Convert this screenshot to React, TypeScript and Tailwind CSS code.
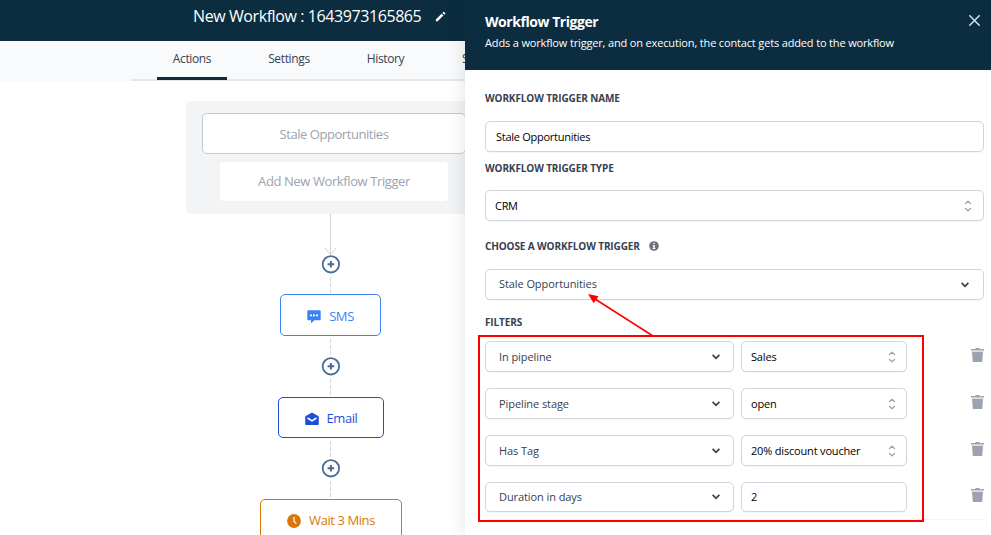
import type { ReactNode } from 'react';

interface FilterRow {
  field: string;
  value: string;
  select: boolean;
  height: string;
}

const FILTERS: FilterRow[] = [
  { field: 'In pipeline', value: 'Sales', select: true, height: 'h-[31px]' },
  { field: 'Pipeline stage', value: 'open', select: true, height: 'h-[31px]' },
  { field: 'Has Tag', value: '20% discount voucher', select: true, height: 'h-[31px]' },
  { field: 'Duration in days', value: '2', select: false, height: 'h-[30px]' },
];

function IconPencil() {
  return (
    <svg width="11" height="11" viewBox="0 0 11 11" fill="#fff" className="mt-px" aria-hidden="true">
      <path d="M.8 10.300v-1.900L6.600 2.700l1.800 1.800-5.700 5.800zM7.400 1.900l.9-.9a.6.6 0 0 1 .8 0l1.100 1.100a.6.6 0 0 1 0 .8l-.9.9z" />
    </svg>
  );
}

function IconClose() {
  return (
    <svg width="11" height="11" viewBox="0 0 11 11" stroke="#d3dcfb" strokeWidth="1.500" aria-hidden="true">
      <path d="M.3.300l10.400 10.400M10.700.300L.3 10.700" />
    </svg>
  );
}

function IconChevron() {
  return (
    <svg width="8" height="6" viewBox="0 0 8 6" fill="none" stroke="#374151" strokeWidth="1.800" aria-hidden="true">
      <path d="M.6.900L4 4.300 7.400.900" />
    </svg>
  );
}

function IconSelector() {
  return (
    <svg width="8" height="12" viewBox="0 0 8 12" fill="none" stroke="#9ca3af" strokeWidth="1.300" strokeLinecap="round" strokeLinejoin="round" aria-hidden="true">
      <path d="M1.500 3.500L4 1.200l2.500 2.300M1.500 8.500L4 10.800l2.500-2.300" />
    </svg>
  );
}

function IconTrash() {
  return (
    <svg width="13" height="15" viewBox="0 0 13 15" fill="#9ca3af" aria-hidden="true">
      <path d="M4.500 0h4v1H13v1.500H0V1h4.500z" />
      <path d="M1 3.700h11l-.8 10.400H1.800z" />
      <path d="M.5 2.500h12v1.200H.5z" fill="#d1d5db" />
    </svg>
  );
}

function IconInfo() {
  return (
    <svg width="10" height="10" viewBox="0 0 10 10" aria-hidden="true">
      <circle cx="5" cy="5" r="4.800" fill="#6b7280" />
      <path d="M4.400 1.800h1.400v1.300H4.400zM3.800 4h2v2.900h.6v1H3.600v-1h.7V5h-.5z" fill="#fff" />
    </svg>
  );
}

function IconSms() {
  return (
    <svg width="14" height="14" viewBox="0 0 14 14" aria-hidden="true">
      <path d="M1.300.300h11.400a1 1 0 0 1 1 1v8a1 1 0 0 1-1 1H7.500L4 13.200v-2.900H1.300a1 1 0 0 1-1-1v-8a1 1 0 0 1 1-1z" fill="#3b82f6" />
      <path d="M3 4.500h2v1.800H3zM6 4.500h2v1.800H6zM9 4.500h2v1.800H9z" fill="#fff" />
    </svg>
  );
}

function IconEmail() {
  return (
    <svg width="14" height="14" viewBox="0 0 14 14" aria-hidden="true">
      <path d="M7 .500l6.200 3.600c.4.200.6.500.6.900v7c0 .6-.5 1-1 1H1.200c-.6 0-1-.4-1-1V5c0-.4.200-.7.600-.9z" fill="#1d4ed8" />
      <path d="M2.600 6L7 8.900 11.400 6" fill="none" stroke="#fff" strokeWidth="1.500" />
    </svg>
  );
}

function IconClock() {
  return (
    <svg width="14" height="14" viewBox="0 0 14 14" aria-hidden="true">
      <circle cx="7" cy="7" r="6.900" fill="#d97706" />
      <path d="M7 3v4.200l2.300 2.500" fill="none" stroke="#fff" strokeWidth="1.200" />
    </svg>
  );
}

function AddStep() {
  return (
    <svg width="19" height="19" viewBox="0 0 19 19" fill="none" stroke="#4a6b93" className="shrink-0" aria-hidden="true">
      <circle cx="9.900" cy="9.300" r="8.200" strokeWidth="1.800" />
      <path d="M9.900 6v6.600M6.600 9.300h6.600" strokeWidth="2" />
    </svg>
  );
}

function Dashes({ height }: { height: number }) {
  return (
    <svg width="1" height={height} className="shrink-0" aria-hidden="true">
      <path d={`M.5 3V${height}`} stroke="#d1d5db" strokeDasharray="4 2" />
    </svg>
  );
}

function Label({ children }: { children: ReactNode }) {
  return <div className="flex h-4 items-center text-[10px] font-bold tracking-[-0.120px] text-[#374151]">{children}</div>;
}

function Field({ className, children }: { className: string; children: ReactNode }) {
  return (
    <div className={`flex items-center justify-between rounded-[5px] border border-[#d1d5db] bg-white shadow-[0_1px_1px_rgba(0,0,0,0.04)] ${className}`}>
      {children}
    </div>
  );
}

function WorkflowCanvas() {
  return (
    <main className="flex flex-1 flex-col overflow-hidden bg-white pt-5">
      <div className="ml-[186px] flex h-[113px] w-[296px] shrink-0 flex-col items-center rounded-[5px] bg-[#f3f4f6] pt-3 text-[13px] text-[#9ca3af]">
        <div className="flex h-[41px] w-[264px] items-center justify-center rounded-[5px] border border-[#c3cad0] bg-white pt-0.5 tracking-[-0.450px]">
          Stale Opportunities
        </div>
        <div className="mt-[7px] flex h-[41px] w-[230px] items-center justify-center rounded-[5px] border border-dotted border-[#e5e7eb] bg-white tracking-[-0.400px]">
          Add New Workflow Trigger
        </div>
      </div>
      <div className="flex w-[661px] shrink-0 flex-col items-center text-[13px]">
        <svg width="13" height="41" viewBox="0 0 13 41" fill="none" stroke="#d1d5db" className="shrink-0" aria-hidden="true">
          <path d="M6.500 0v41M1 34l5.500 6.500L12 34" />
        </svg>
        <AddStep />
        <Dashes height={20} />
        <div className="flex h-[42px] w-[101px] shrink-0 items-center justify-center gap-2 rounded-[5px] border border-[#3b82f6] pt-[3px] text-[#3b82f6]">
          <IconSms />
          <span className="tracking-[-0.400px]">SMS</span>
        </div>
        <Dashes height={21} />
        <AddStep />
        <Dashes height={21} />
        <div className="flex h-[41px] w-[106px] shrink-0 items-center justify-center gap-2 rounded-[5px] border border-[#1d4ed8] pt-0.5 pl-px text-[#1d4ed8]">
          <IconEmail />
          <span className="tracking-[-0.450px]">Email</span>
        </div>
        <Dashes height={21} />
        <AddStep />
        <Dashes height={21} />
        <div className="flex h-[42px] w-[142px] shrink-0 items-center justify-center gap-2 rounded-[5px] border border-[#d97706] pt-0.5 pl-px text-[#d97706]">
          <IconClock />
          <span className="tracking-[-0.420px]">Wait 3 Mins</span>
        </div>
      </div>
    </main>
  );
}

function TriggerPanel() {
  return (
    <aside className="relative z-10 flex h-full w-[526px] shrink-0 flex-col bg-white shadow-[0_0_18px_rgba(0,0,0,0.12)]">
      <header className="flex h-[70px] shrink-0 justify-between bg-[#0c2d40] pr-[11px] pl-5 text-white">
        <div>
          <h2 className="mt-3 h-5 text-[14px] leading-5 font-bold tracking-[-0.450px]">Workflow Trigger</h2>
          <p className="mt-[3px] text-[11px] leading-4 tracking-[-0.155px]">
            Adds a workflow trigger, and on execution, the contact gets added to the workflow
          </p>
        </div>
        <button type="button" aria-label="Close" className="mt-[15px] h-[11px]">
          <IconClose />
        </button>
      </header>

      <div className="flex flex-col pt-5 pl-5 text-[11px] text-[#374151]">
        <Label>WORKFLOW TRIGGER NAME</Label>
        <Field className="mt-[15px] h-[31px] w-[499px] pr-[9px] pl-2.5 text-black">
          <span className="pt-px tracking-[-0.270px]">Stale Opportunities</span>
        </Field>
        <div className="mt-2">
          <Label>WORKFLOW TRIGGER TYPE</Label>
        </div>
        <Field className="mt-3.5 h-[31px] w-[499px] pr-[11px] pl-[9px] text-black">
          <span className="pt-0.5 tracking-[-0.300px]">CRM</span>
          <IconSelector />
        </Field>
        <div className="mt-[17px] flex items-center gap-[9px]">
          <Label>CHOOSE A WORKFLOW TRIGGER</Label>
          <IconInfo />
        </div>
        <Field className="mt-[15px] h-[31px] w-[499px] pr-3.5 pl-[13px]">
          <span className="font-medium tracking-[-0.080px]">Stale Opportunities</span>
          <IconChevron />
        </Field>
        <div className="mt-3.5">
          <Label>FILTERS</Label>
        </div>

        <div className="relative mt-[11px] flex h-[178px] w-[500px] flex-col gap-4 rounded shadow-[0_1px_1px_rgba(0,0,0,0.05)]">
          {FILTERS.map((row) => (
            <div key={row.field} className="flex items-center">
              <Field className={`w-[249px] pr-[13px] pl-[13px] ${row.height}`}>
                <span className="pt-px font-medium tracking-[-0.080px]">{row.field}</span>
                <IconChevron />
              </Field>
              <Field className={`ml-[7px] w-[166px] pr-2.5 pl-[9px] text-black ${row.height}`}>
                <span className="pt-px tracking-[-0.180px]">{row.value}</span>
                {row.select && <IconSelector />}
              </Field>
              <button type="button" aria-label="Delete filter" className="mb-[3px] ml-16">
                <IconTrash />
              </button>
            </div>
          ))}
          {/* callout frame and arrow over the filter rows */}
          <div className="absolute -top-1.5 -left-[7px] h-[187px] w-[446px] border-2 border-[#fe0000]" />
          <svg width="68" height="44" viewBox="0 0 68 44" className="absolute -top-12 left-[102px]" aria-hidden="true">
            <path d="M66 43L8 6" stroke="#fe0000" strokeWidth="1.500" />
            <path d="M1 1l10.500 2.300-4.800 7z" fill="#fe0000" />
          </svg>
        </div>
      </div>
    </aside>
  );
}

export default function App() {
  return (
    <div className="flex h-[535px] w-[991px] overflow-hidden bg-white font-['Open_Sans','Noto_Sans',sans-serif]">
      <div className="flex w-[465px] shrink-0 flex-col overflow-hidden">
        <header className="flex h-[41px] shrink-0 items-center gap-3.5 bg-[#0c2d40] pb-[9px] pl-[193px] text-white">
          <h1 className="text-[16px] whitespace-nowrap tracking-[-0.410px]">New Workflow : 1643973165865</h1>
          <IconPencil />
        </header>
        <div className="h-[40px] shrink-0 bg-[#f9fafb]">
          <nav className="ml-[131px] flex h-[40px] gap-[26px] border-b-2 border-[#e5e7eb] pl-[26px] text-[12px] whitespace-nowrap text-[#374151]">
            <a className="flex h-[39px] w-[70px] shrink-0 justify-center border-b-3 border-[#0c2d40] pt-[9px] tracking-[-0.350px]">Actions</a>
            <a className="w-[72px] shrink-0 pt-[9px] text-center tracking-[-0.350px]">Settings</a>
            <a className="w-[69px] shrink-0 pt-[9px] text-center tracking-[-0.350px]">History</a>
            <a className="shrink-0 pt-[9px] pl-4">Status</a>
          </nav>
        </div>
        <WorkflowCanvas />
      </div>
      <TriggerPanel />
    </div>
  );
}
